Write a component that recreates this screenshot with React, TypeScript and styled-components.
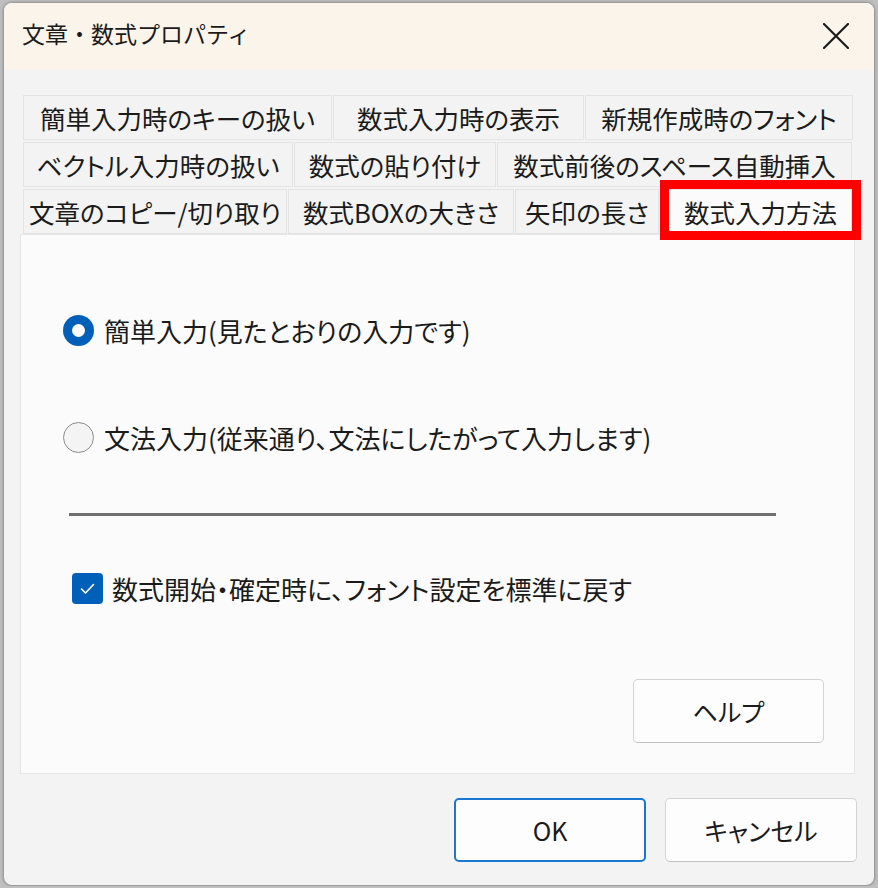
import { FC } from 'react';
import styled, { createGlobalStyle } from 'styled-components';

const GlobalStyle = createGlobalStyle`
	html, body {
		margin: 0;
		padding: 0;
		background: #bfbfbf;
	}

	body {
		font-family: "Noto Sans CJK JP", "Noto Sans", sans-serif;
		color: #1b1b1b;
	}
`;

interface TabInfo {
	label: string;
	width: number;
	selected?: boolean;
}

const tabRows: TabInfo[][] = [
	[
		{ label: '簡単入力時のキーの扱い', width: 309 },
		{ label: '数式入力時の表示', width: 251 },
		{ label: '新規作成時のフォント', width: 268 },
	],
	[
		{ label: 'ベクトル入力時の扱い', width: 270 },
		{ label: '数式の貼り付け', width: 202 },
		{ label: '数式前後のスペース自動挿入', width: 355 },
	],
	[
		{ label: '文章のコピー/切り取り', width: 264 },
		{ label: '数式BOXの大きさ', width: 226 },
		{ label: '矢印の長さ', width: 144 },
		{ label: '数式入力方法', width: 192, selected: true },
	],
];

const CloseIcon: FC = () => (
	<svg width='26' height='26' viewBox='0 0 26 26'>
		<path d='M1 1 L25 25 M25 1 L1 25' stroke='#1b1b1b' strokeWidth='2.2' strokeLinecap='round' />
	</svg>
);

const CheckIcon: FC = () => (
	<svg width='31' height='31' viewBox='0 0 31 31'>
		<path d='M9.5 16 L13.5 20 L21.5 11.5' fill='none' stroke='#ffffff' strokeWidth='1.6' strokeLinecap='round' strokeLinejoin='round' />
	</svg>
);

const App: FC = () => {
	return (
		<>
			<GlobalStyle />
			<Dialog>
				<TitleBar>
					<Title>文章・数式プロパティ</Title>
					<CloseButton>
						<CloseIcon />
					</CloseButton>
				</TitleBar>
				<Body>
					<TabStrip>
						{tabRows.map((row, i) => (
							<TabRow key={i}>
								{row.map((tab) => (
									<Tab key={tab.label} $width={tab.width} $selected={tab.selected}>
										{tab.label}
										{tab.selected && <Highlight />}
									</Tab>
								))}
							</TabRow>
						))}
					</TabStrip>
					<Panel>
						<OptionRow>
							<Radio $checked />
							<Label>簡単入力(見たとおりの入力です)</Label>
						</OptionRow>
						<OptionRow $top={76}>
							<Radio />
							<Label>文法入力(従来通り、文法にしたがって入力します)</Label>
						</OptionRow>
						<Separator />
						<CheckRow>
							<Checkbox>
								<CheckIcon />
							</Checkbox>
							<Label>数式開始・確定時に、フォント設定を標準に戻す</Label>
						</CheckRow>
						<HelpButton>ヘルプ</HelpButton>
					</Panel>
					<Footer>
						<Button $primary>OK</Button>
						<Button>キャンセル</Button>
					</Footer>
				</Body>
			</Dialog>
		</>
	);
};

export default App;

const Dialog = styled.div`
	box-sizing: border-box;
	width: 872px;
	height: 884px;
	margin: 2px 0 0 3px;
	display: flex;
	flex-direction: column;
	border: 1px solid #9c9c9c;
	border-radius: 9px;
	overflow: hidden;
	background: #f3f3f3;
	box-shadow: 0 0 3px rgb(0 0 0 / 0.25);
`;

const TitleBar = styled.div`
	height: 67px;
	flex: none;
	display: flex;
	align-items: center;
	justify-content: space-between;
	padding: 0 25px 6px 18px;
	box-sizing: border-box;
	background: #faf4eb;
`;

const Title = styled.div`
	font-size: 23px;
	line-height: 1;
`;

const CloseButton = styled.div`
	display: flex;
	align-items: center;
	justify-content: center;
	margin-top: 4px;
`;

const Body = styled.div`
	flex: 1;
	display: flex;
	flex-direction: column;
	padding: 25px 19px 0 16px;
`;

const TabStrip = styled.div`
	display: flex;
	flex-direction: column;
	gap: 2px;
	padding: 0 0 0 3px;
`;

const TabRow = styled.div`
	display: flex;
	gap: 1px;
`;

const Tab = styled.div<{ $width: number; $selected?: boolean }>`
	position: relative;
	box-sizing: border-box;
	width: ${(p) => p.$width}px;
	height: 45px;
	display: flex;
	align-items: center;
	justify-content: center;
	font-size: 25.5px;
	font-feature-settings: "palt";
	line-height: 1;
	white-space: nowrap;
	background: ${(p) => (p.$selected ? '#fbfbfb' : '#f3f3f3')};
	border: 1px solid #e4e4e4;
	border-bottom: ${(p) => (p.$selected ? 'none' : '1px solid #e4e4e4')};
	padding-left: ${(p) => (p.$selected ? '9px' : '0')};
`;

const Highlight = styled.div`
	position: absolute;
	left: -1px;
	right: -10px;
	top: -10px;
	bottom: -6px;
	border: 9px solid #ff0000;
	pointer-events: none;
`;

const Panel = styled.div`
	box-sizing: border-box;
	height: 540px;
	display: flex;
	flex-direction: column;
	align-items: flex-start;
	padding: 80px 30px 30px 42px;
	background: #fbfbfb;
	border: 1px solid #e5e5e5;
`;

const OptionRow = styled.div<{ $top?: number }>`
	display: flex;
	align-items: center;
	gap: 10px;
	margin-top: ${(p) => p.$top ?? 0}px;
`;

const Radio = styled.div<{ $checked?: boolean }>`
	box-sizing: border-box;
	width: 31px;
	height: 31px;
	border-radius: 50%;
	flex: none;
	display: flex;
	align-items: center;
	justify-content: center;
	background: ${(p) => (p.$checked ? '#005fb8' : '#f4f4f4')};
	border: ${(p) => (p.$checked ? 'none' : '1.5px solid #8b8b8b')};

	&::after {
		content: '';
		display: ${(p) => (p.$checked ? 'block' : 'none')};
		width: 13px;
		height: 13px;
		border-radius: 50%;
		background: #ffffff;
	}
`;

const Label = styled.span`
	font-size: 26px;
	font-feature-settings: "palt";
	line-height: 31px;
	white-space: nowrap;
`;

const Separator = styled.div`
	width: 707px;
	height: 3px;
	margin: 60px 0 0 6px;
	background: #6f6f6f;
`;

const CheckRow = styled.div`
	display: flex;
	align-items: center;
	gap: 9px;
	margin: 57px 0 0 9px;
`;

const Checkbox = styled.div`
	width: 31px;
	height: 31px;
	flex: none;
	border-radius: 4px;
	background: #005fb8;
	display: flex;
`;

const HelpButton = styled.div`
	box-sizing: border-box;
	width: 191px;
	height: 64px;
	margin-top: auto;
	align-self: flex-end;
	display: flex;
	align-items: center;
	justify-content: center;
	font-size: 25px;
	font-feature-settings: "palt";
	background: #fdfdfd;
	border: 1px solid #d3d3d3;
	border-bottom-color: #c2c2c2;
	border-radius: 5px;
`;

const Footer = styled.div`
	display: flex;
	justify-content: flex-end;
	gap: 19px;
	margin: 24px -2px 0 0;
`;

const Button = styled.div<{ $primary?: boolean }>`
	box-sizing: border-box;
	width: 192px;
	height: 64px;
	display: flex;
	align-items: center;
	justify-content: center;
	font-size: 25px;
	font-feature-settings: "palt";
	background: #fdfdfd;
	border: ${(p) => (p.$primary ? '2px solid #1976d2' : '1px solid #d3d3d3')};
	border-bottom-color: ${(p) => (p.$primary ? '#1976d2' : '#c2c2c2')};
	border-radius: 5px;
`;
